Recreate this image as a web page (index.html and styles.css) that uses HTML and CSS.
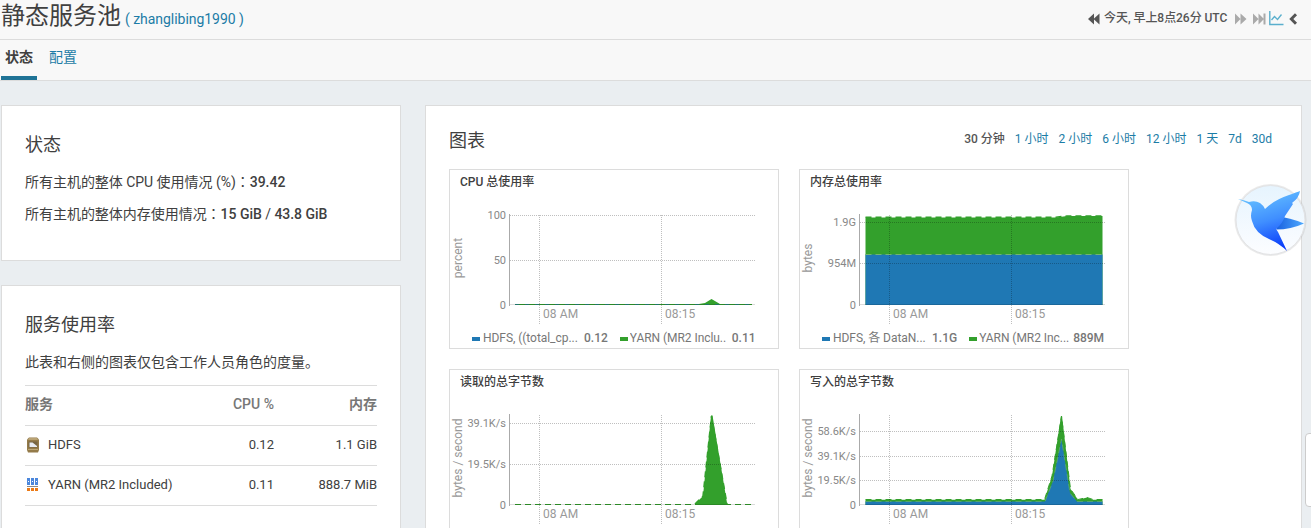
FILE: index.html
```html
<!DOCTYPE html>
<html lang="zh-CN">
<head>
<meta charset="utf-8">
<title>静态服务池</title>
<link rel="stylesheet" href="styles.css">
</head>
<body>
<header class="topbar">
  <div class="heading"><h1>静态服务池</h1><a class="cluster">( zhanglibing1990 )</a></div>
  <div class="timebar">
    <svg class="ic-back" width="12" height="12" viewBox="0 0 12 12"><path d="M6 .5V11.500L0 6zM11.500 .5V11.500L5.500 6z" fill="#555"/></svg>
    <span class="now">今天, 早上8点26分 UTC</span>
    <svg class="ic-fwd" width="12" height="12" viewBox="0 0 12 12"><path d="M0 .5V11.500L5.500 6zM5.500 .5V11.500L11.500 6z" fill="#aaa"/></svg>
    <svg class="ic-end" width="13" height="12" viewBox="0 0 13 12"><path d="M0 .5V11.500L5.500 6zM5.500 .5V11.500L11 6zM10.500 .5h2v11h-2z" fill="#aaa"/></svg>
    <svg class="ic-chart" width="15" height="15" viewBox="0 0 15 15" fill="none" stroke="#5aafcd"><path d="M.8 0V13.500H14.500" stroke-width="1.400"/><path d="M2.500 9L5.500 5.500L8.500 8.500L12.500 3.500" stroke-width="1.300"/></svg>
    <svg class="ic-less" width="9" height="12" viewBox="0 0 9 12"><path d="M7 1.200L2.300 6L7 10.800" fill="none" stroke="#555" stroke-width="2.900"/></svg>
  </div>
</header>
<nav class="tabs"><a class="tab active">状态</a><a class="tab">配置</a></nav>

<main class="content">
  <div class="side">
    <section class="panel status">
      <h2>状态</h2>
      <p>所有主机的整体 CPU 使用情况 (%)<span class="colon" lang="zh-TW">：</span><b>39.42</b></p>
      <p>所有主机的整体内存使用情况<span class="colon" lang="zh-TW">：</span><b>15 GiB</b> / <b>43.8 GiB</b></p>
    </section>
    <section class="panel usage">
      <h2>服务使用率</h2>
      <p>此表和右侧的图表仅包含工作人员角色的度量。</p>
      <div class="table">
        <div class="row head"><span>服务</span><span>CPU %</span><span>内存</span></div>
        <div class="row"><span class="svc"><svg width="16" height="16" viewBox="0 0 16 16"><path d="M4 .5h8l2 2v10.500l-1 2.500H3L2 13V2.500z" fill="#947b4a"/><path d="M4 1h8l1 2H3z" fill="#b9a273"/><path d="M3.500 4.500h9v6h-9z" fill="#776542"/><path d="M4.500 5.500h3l4.500 3.500v1H4.500z" fill="#e8ebf2"/><path d="M3 12h10v1H3z" fill="#bca675"/></svg>HDFS</span><span>0.12</span><span>1.1 GiB</span></div>
        <div class="row"><span class="svc"><svg width="16" height="16" viewBox="0 0 16 16" shape-rendering="crispEdges"><path d="M2 1h3v3H2zM6 1h3v3H6zM10 1h3v3h-3zM2 4h1v1H2zM4 4h1v1H4zM6 4h1v1H6zM8 4h1v1H8zM10 4h1v1h-1zM12 4h1v1h-1zM2 5h3v3H2zM6 5h3v3H6zM10 5h3v3h-3z" fill="#4c87dc"/><path d="M2 9h11v1H2z" fill="#888"/><path d="M2 11h3v3H2zM6 11h3v3H6zM10 11h3v3h-3z" fill="#ec7a16"/></svg>YARN (MR2 Included)</span><span>0.11</span><span>888.7 MiB</span></div>
      </div>
    </section>
  </div>

  <section class="panel charts">
    <div class="charts-head">
      <h2>图表</h2>
      <div class="ranges"><b>30 分钟</b><a>1 小时</a><a>2 小时</a><a>6 小时</a><a>12 小时</a><a>1 天</a><a>7d</a><a>30d</a></div>
    </div>
    <div class="grid">
      <article class="chart">
        <h3>CPU 总使用率</h3>
        <svg class="plot" width="328" height="134" viewBox="1 24 328 134">
          <path class="blue" d="M66 135h237v1H66z"/>
          <path class="green" d="M66 135H250L256 134L262.500 130L271 135H303V136H66z"/>
          <path class="bluedash" d="M66 135.500H303"/>
          <path class="grid-line" d="M61 46.500H306M61 91.500H306M90.500 46V156M212.500 46V156"/>
          <path class="base" d="M60 135.500H306"/><path class="axis" d="M60.500 45V137"/>
          <g class="tick"><text x="57" y="50">100</text><text x="57" y="95">50</text><text x="57" y="140">0</text></g>
          <g class="time"><text x="94" y="149">08 AM</text><text x="216" y="149">08:15</text></g>
          <text class="unit" transform="translate(12.500 89) rotate(-90)">percent</text>
        </svg>
        <div class="legend"><i class="key k-blue"></i><span class="name n1">HDFS, ((total_cp...</span><b>0.12</b><i class="key k-green"></i><span class="name n2">YARN (MR2 Inclu..</span><b>0.11</b></div>
      </article>
      <article class="chart">
        <h3>内存总使用率</h3>
        <svg class="plot" width="328" height="134" viewBox="1 24 328 134">
          <path class="green" d="M66.500 48.500H257L268 47H303.500V136H66.500z"/>
          <path class="blue" d="M66.500 85.500H303.500V136H66.500z"/>
          <path class="greenline" d="M66.500 48.200H257L268 47H303.500"/>
          <path class="seam" d="M66.500 85.500H303.500"/>
          <path class="grid-line" d="M61 53.500H306M61 94.500H306M90.500 46V156M212.500 46V156"/>
          <path class="base" d="M60 135.500H306"/><path class="axis" d="M60.500 45V137"/>
          <g class="tick"><text x="57" y="57">1.9G</text><text x="57" y="98">954M</text><text x="57" y="140">0</text></g>
          <g class="time"><text x="94" y="149">08 AM</text><text x="216" y="149">08:15</text></g>
          <text class="unit" transform="translate(12.500 89) rotate(-90)">bytes</text>
        </svg>
        <div class="legend"><i class="key k-blue"></i><span class="name n3">HDFS, 各 DataN...</span><b>1.1G</b><i class="key k-green"></i><span class="name n4">YARN (MR2 Inc...</span><b>889M</b></div>
      </article>
      <article class="chart">
        <h3>读取的总字节数</h3>
        <svg class="plot" width="328" height="134" viewBox="1 24 328 134">
          <path class="green" d="M246 136L247 134L254 127L262 46.500H263.500L278 134L279 136z"/>
          <path class="greenline" d="M246 135L254 127L262.500 47L278 135"/>
          <path class="greendash" d="M66 135.500H303"/>
          <path class="grid-line" d="M61 54.500H306M61 95.500H306M90.500 46V156M212.500 46V156"/>
          <path class="base" d="M60 135.500H306"/><path class="axis" d="M60.500 45V137"/>
          <g class="tick"><text x="57" y="58">39.1K/s</text><text x="57" y="99">19.5K/s</text><text x="57" y="140">0</text></g>
          <g class="time"><text x="94" y="149">08 AM</text><text x="216" y="149">08:15</text></g>
          <text class="unit" transform="translate(12.500 89) rotate(-90)">bytes / second</text>
        </svg>
      </article>
      <article class="chart">
        <h3>写入的总字节数</h3>
        <svg class="plot" width="328" height="134" viewBox="1 24 328 134">
          <path class="green" d="M66.500 130.700H245.500L253 107L262 47H263L271.500 120L279 130.700L288 128.500L294 130.700H303.500V136H66.500z"/>
          <path class="greenline thin" d="M66.500 130.500H245.500L253 107L262.500 47L271.500 120L279 130.500L288 128.500L294 130.500H303.500"/>
          <path class="blue" d="M66.500 132.500H246L254 112L262.500 70L271 124L278 132.500H303.500V136H66.500z"/>
          <path class="seam faint" d="M66.500 132.500H246L254 112L262.500 70L271 124L278 132.500H303.500"/>
          <path class="grid-line" d="M61 62.500H306M61 87.500H306M61 111.500H306M90.500 46V156M212.500 46V156"/>
          <path class="base" d="M60 135.500H306"/><path class="axis" d="M60.500 45V137"/>
          <g class="tick"><text x="57" y="66">58.6K/s</text><text x="57" y="91">39.1K/s</text><text x="57" y="115">19.5K/s</text><text x="57" y="140">0</text></g>
          <g class="time"><text x="94" y="149">08 AM</text><text x="216" y="149">08:15</text></g>
          <text class="unit" transform="translate(12.500 89) rotate(-90)">bytes / second</text>
        </svg>
      </article>
    </div>
  </section>
</main>

<svg class="bird" width="76" height="76" viewBox="0 0 76 76">
  <defs>
    <linearGradient id="disc" x1="0" y1="0" x2="0" y2="1"><stop offset="0" stop-color="#e6f4fe"/><stop offset="1" stop-color="#fcfdff"/></linearGradient>
    <linearGradient id="body" x1=".3" y1="0" x2=".6" y2="1"><stop offset="0" stop-color="#68c5ff"/><stop offset=".5" stop-color="#408fff"/><stop offset="1" stop-color="#0637fa"/></linearGradient>
    <linearGradient id="tail" x1="0" y1="0" x2="1" y2="0"><stop offset="0" stop-color="#1860df"/><stop offset="1" stop-color="#4eaaff"/></linearGradient>
  </defs>
  <circle cx="38.500" cy="38" r="36" fill="#aaa" opacity=".25"/>
  <circle cx="38.500" cy="38" r="34.500" fill="url(#disc)" stroke="#e2e3e5"/>
  <path d="M48 35Q56 35 72 41.500Q59 47.500 44 47.500z" fill="url(#tail)"/>
  <path d="M6 17Q12 18 17 20Q23 18 28 21Q31 23 33 27Q42 18 57 13Q65 10 68 9Q67 16 60 21L61 22L53 34Q51 41 44 47L46 50L55 69Q47 61 37 57Q23 51 20 39Q18 34 20 28Q20 23 15 21z" fill="url(#body)"/>
</svg>
<div class="drawer"></div>
</body>
</html>
```

FILE: styles.css
```css
* { box-sizing: border-box; }
body {
  margin: 0;
  width: 1311px;
  height: 528px;
  overflow: hidden;
  position: relative;
  background: #eaeef1;
  color: #404040;
  font: 14px/20px Roboto, "Noto Sans CJK SC", sans-serif;
}
h1, h2, h3, p { margin: 0; font-weight: 400; }
b { font-weight: 500; }
a { color: #1c7ca6; }

.topbar {
  display: flex;
  justify-content: space-between;
  height: 40px;
  background: #f8f8f8;
  border-bottom: 1px solid #dcdcdc;
}
.heading { display: flex; align-items: baseline; padding-left: 1px; }
.heading h1 { font-size: 24px; line-height: 32px; }
.cluster { margin-left: 4px; letter-spacing: -.04px; }
.timebar { display: flex; align-items: center; height: 37px; padding-right: 13px; }
.now { font-size: 12px; font-weight: 500; line-height: 18px; color: #555; margin: -2px 8px 0 4px; white-space: nowrap; width: 123px; letter-spacing: -.05px; }
.ic-end { margin-left: 6px; }
.ic-chart { margin-left: 3px; }
.ic-less { margin-left: 5px; }

.tabs {
  display: flex;
  gap: 8px;
  height: 41px;
  padding-left: 1px;
  background: #f8f8f8;
  border-bottom: 1px solid #dcdcdc;
}
.tab { height: 40px; padding: 7px 4px 0; border-bottom: 4px solid transparent; }
.tab.active { color: #404040; font-weight: 700; border-bottom-color: #1f7396; }

.content { display: flex; align-items: flex-start; gap: 24px; height: 447px; overflow: hidden; padding: 24px 9px 0 1px; }
.side { width: 400px; flex: none; display: flex; flex-direction: column; gap: 24px; }
.panel { background: #fff; border: 1px solid #dcdcdc; }
.panel h2 { font-size: 18px; line-height: 24px; }
.status { height: 156px; padding: 27px 23px 0; }
.status p { height: 20px; margin-top: 12px; letter-spacing: -.03px; }
.status h2 + p { margin-top: 15px; }
.colon { font-family: "Noto Sans CJK TC", sans-serif; line-height: 1; }
.usage { height: 300px; padding: 27px 23px 0; }
.usage p { margin-top: 15px; }
.table { margin-top: 13px; border-top: 1px solid #dcdcdc; }
.row {
  display: grid;
  grid-template-columns: 189px 60px 103px;
  align-items: center;
  height: 40px;
  padding-bottom: 1px;
  font-size: 13px;
  border-bottom: 1px solid #dcdcdc;
}
.row span:not(:first-child) { text-align: right; }
.row.head { padding-bottom: 3px; font-size: 14px; font-weight: 500; color: #777; }
.row.head span:first-child, .row.head span:last-child { font-weight: 700; }
.svc { display: flex; align-items: center; gap: 7px; }

.charts { width: 877px; flex: none; height: 500px; padding: 20px 23px 0; }
.charts-head { display: flex; justify-content: space-between; height: 43px; padding: 3px 6px 0 0; }
.ranges { display: flex; gap: 10px; font-size: 12px; line-height: 20px; }
.ranges b { color: #555; }
.grid { display: grid; grid-template-columns: 330px 330px; gap: 20px; }
.chart { height: 180px; border: 1px solid #dcdcdc; background: #fff; }
.chart h3 { height: 23px; padding-left: 10px; font-size: 12px; line-height: 24px; font-weight: 500; }
.plot { display: block; font-family: Roboto, sans-serif; }
.green { fill: #33a02c; }
.blue { fill: #1f78b4; }
.greenline { fill: none; stroke: #33a02c; stroke-width: 1.5; stroke-dasharray: 6 4; }
.greenline.thin { stroke-width: 1; }
.seam { fill: none; stroke: #70b66e; stroke-dasharray: 6 4; }
.seam.faint { stroke-opacity: .6; }
.greendash { stroke: #33a02c; stroke-dasharray: 6 4; }
.bluedash { stroke: #1f78b4; stroke-dasharray: 4 6; opacity: .6; }
.grid-line { fill: none; stroke: #000; stroke-opacity: .25; stroke-dasharray: 1 1; }
.base { stroke: #000; stroke-opacity: .14; }
.axis { stroke: #aaa; }
.tick text { font-size: 11px; fill: #888; text-anchor: end; }
.time text { font-size: 12px; fill: #999; letter-spacing: .1px; }
.unit { font-size: 12px; fill: #999; text-anchor: middle; }
.legend { display: flex; align-items: center; height: 20px; padding: 2px 24px 0 22px; font-size: 12px; line-height: 16px; color: #777; white-space: nowrap; }
.legend b { margin-left: auto; }
.key { flex: none; width: 8px; height: 4px; margin-top: 2px; }
.k-blue { background: #1f78b4; margin-right: 3px; }
.k-green { background: #33a02c; margin-left: 12px; margin-right: 2px; }
.name { flex: none; overflow: hidden; letter-spacing: -.05px; }
.n1 { width: 101px; }
.n2 { width: 102px; }
.n3 { width: 99px; }
.n4 { width: 94px; }

.bird { position: absolute; left: 1232px; top: 182px; }
.drawer {
  position: absolute;
  left: 1305px;
  top: 433px;
  width: 12px;
  height: 74px;
  background: #fff;
  border: 1px solid #ccc;
  border-radius: 4px;
}
```
